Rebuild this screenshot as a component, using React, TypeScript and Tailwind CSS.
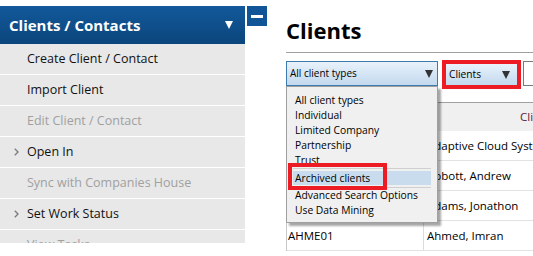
import React from 'react'

const sideItems = [
  { label: 'Create Client / Contact', enabled: true },
  { label: 'Import Client', enabled: true },
  { label: 'Edit Client / Contact', enabled: false },
  { label: 'Open In', enabled: true, sub: true },
  { label: 'Sync with Companies House', enabled: false },
  { label: 'Set Work Status', enabled: true, sub: true },
  { label: 'View Tasks', enabled: false },
]

const typeOptions = ['All client types', 'Individual', 'Limited Company', 'Partnership', 'Trust']

// codes of the first rows sit under the open dropdown, so they are left blank
const rows = [
  { code: '', name: 'Adaptive Cloud Systems Ltd' },
  { code: '', name: 'Abbott, Andrew' },
  { code: '', name: 'Adams, Jonathon' },
  { code: 'AHME01', name: 'Ahmed, Imran' },
]

function DownArrow({ className = '' }: { className?: string }) {
  return (
    <svg width="8" height="8" viewBox="0 0 8 8" className={className}>
      <polygon points="0,0 8,0 4,8" fill="currentColor" />
    </svg>
  )
}

function Chevron() {
  return (
    <svg width="5" height="8" viewBox="0 0 5 8" className="text-[#7a7a7a]">
      <polyline points="0.8,0.8 4,4 0.8,7.2" fill="none" stroke="currentColor" strokeWidth="1.3" />
    </svg>
  )
}

export default function App() {
  return (
    <div className="w-[533px] h-[256px] overflow-hidden bg-white flex font-['Open_Sans',sans-serif]">
      {/* sidebar */}
      <aside className="w-[245px] shrink-0 pt-[6px]">
        <div className="h-[237px] overflow-hidden flex flex-col">
          <div className="h-[38px] shrink-0 bg-gradient-to-b from-[#12599b] to-[#0b457c] flex items-center justify-between pl-[9px] pr-[12px]">
            <span className="text-white font-bold text-[15px] leading-none">Clients / Contacts</span>
            <DownArrow className="text-white" />
          </div>
          {sideItems.map((it) => (
            <div
              key={it.label}
              className="h-[31px] shrink-0 bg-[#e8e8e8] border-b border-white flex items-center pl-[14px]"
            >
              <span className="w-[13px] flex items-center">{it.sub && <Chevron />}</span>
              <span className={`text-[12.5px] ${it.enabled ? 'text-[#111]' : 'text-[#a0a0a0]'}`}>{it.label}</span>
            </div>
          ))}
        </div>
      </aside>

      {/* collapse toggle */}
      <div className="ml-[2px] pt-[6px] shrink-0">
        <div className="w-[20px] h-[20px] bg-[#0f5597] flex items-center justify-center">
          <div className="w-[12px] h-[3px] bg-white" />
        </div>
      </div>

      {/* main */}
      <main className="ml-[19px] w-[300px] shrink-0 pt-[15px]">
        <h1 className="text-[22px] leading-[30px] font-bold text-black">Clients</h1>
        <div className="mt-[7px] h-px bg-[#a0a0a0]" />

        <div className="mt-[7px] flex items-start h-[29px] relative z-10">
          <div className="relative mt-[1px]">
            <div className="w-[152px] h-[25px] border border-[#3d7bae] bg-gradient-to-b from-[#e9f2fb] to-[#c2d9ee] flex items-center justify-between pl-[3px] pr-[4px]">
              <span className="text-[10px] text-black">All client types</span>
              <DownArrow className="text-[#333]" />
            </div>

            <div className="absolute top-full left-0 w-[152px] border border-[#a0a0a0] bg-[#f0f0f0] shadow-[3px_3px_2px_rgba(0,0,0,0.35)] pt-[6px] pb-[4px]">
              {typeOptions.map((o) => (
                <div key={o} className="h-[15px] leading-[15px] pl-[8px] text-[10.3px] text-black">
                  {o}
                </div>
              ))}
              <div className="mx-[6px] h-px bg-[#cfcfcf]" />
              <div className="mt-[2px] mx-[6px] h-[14px] leading-[14px] pl-[2px] bg-[#c8dcee] text-[10.3px] text-black">
                Archived clients
              </div>
              <div className="mt-[2px] mx-[6px] h-px bg-[#cfcfcf]" />
              <div className="h-[15px] leading-[15px] pl-[8px] text-[10.3px] text-black">Advanced Search Options</div>
              <div className="h-[15px] leading-[15px] pl-[8px] text-[10.3px] text-black">Use Data Mining</div>

              <div className="absolute left-[1px] top-[76px] w-[99px] h-[27px] border-[4px] border-[#ed1c24]" />
            </div>
          </div>

          <div className="ml-[4px] w-[79px] h-[29px] border-[4px] border-[#ed1c24] bg-gradient-to-b from-[#e9f2fb] to-[#c2d9ee] flex items-center justify-between pl-[3px] pr-[7px]">
            <span className="text-[10.2px] text-black">Clients</span>
            <DownArrow className="text-[#333]" />
          </div>

          <div className="ml-[2px] mt-[1px] w-[40px] h-[25px] border border-[#7a7a7a] bg-white" />
        </div>

        <div className="mt-[13px] border-l border-[#c8c8c8]">
          <div className="h-[29px] border-t border-[#a0a0a0] bg-[#f0f0f0] flex items-center">
            <div className="w-[137px] shrink-0" />
            <div className="pl-[96px] text-[11.5px] text-[#5b1e3a] whitespace-nowrap">Client Name</div>
          </div>
          {rows.map((r) => (
            <div key={r.name} className="h-[30px] border-b border-[#e2e2e2] flex items-center text-[11.5px] text-black">
              <div className="w-[137px] shrink-0 h-full border-r border-[#dcdcdc] pl-[1px] flex items-center">{r.code}</div>
              <div className="pl-[3px] whitespace-nowrap">{r.name}</div>
            </div>
          ))}
        </div>
      </main>
    </div>
  )
}
